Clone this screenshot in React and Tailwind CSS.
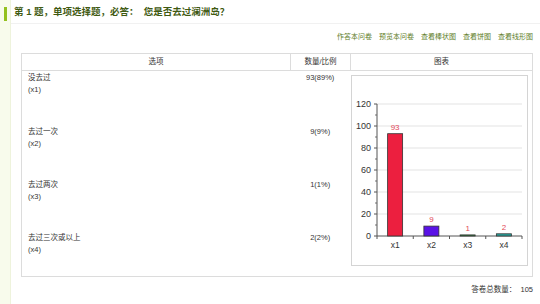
import React from 'react';

const font = { fontFamily: '"Liberation Sans", "Noto Sans CJK SC", sans-serif' };

const rows = [
    { label: '没去过', code: '(x1)', count: '93(89%)', h: 'h-[54px]' },
    { label: '去过一次', code: '(x2)', count: '9(9%)', h: 'h-[53px]' },
    { label: '去过两次', code: '(x3)', count: '1(1%)', h: 'h-[53px]' },
    { label: '去过三次或以上', code: '(x4)', count: '2(2%)', h: 'h-[45px]' },
];

const bars = [
    { name: 'x1', value: 93, fill: '#ec1f3f' },
    { name: 'x2', value: 9, fill: '#5a12e6' },
    { name: 'x3', value: 1, fill: '#2f9a3c' },
    { name: 'x4', value: 2, fill: '#26a69e' },
];

const links = ['作答本问卷', '预览本问卷', '查看棒状图', '查看饼图', '查看线形图'];

// bar chart drawn in the chart box coordinate space
const BarChart = () => {
    const x0 = 25;
    const x1 = 170;
    const y0 = 160;
    const k = 1.1;
    const cw = (x1 - x0) / 4;
    const grid = [20, 40, 60, 80, 100, 120];
    const minor = [10, 30, 50, 70, 90, 110];
    return (
        <svg width="176" height="190" viewBox="0 0 176 190" className="block">
            {grid.map((v) => (
                <line key={v} x1={x0} x2={x1} y1={y0 - v * k} y2={y0 - v * k} stroke="#e3e3e3" strokeWidth="1" />
            ))}
            {[0, ...grid].map((v) => (
                <g key={'l' + v}>
                    <line x1={x0 - 3} x2={x0} y1={y0 - v * k} y2={y0 - v * k} stroke="#555" strokeWidth="1" />
                    <text x={x0 - 6} y={y0 - v * k + 3} fontSize="9" textAnchor="end" fill="#333" style={font}>
                        {v}
                    </text>
                </g>
            ))}
            {minor.map((v) => (
                <line key={'m' + v} x1={x0 - 2} x2={x0} y1={y0 - v * k} y2={y0 - v * k} stroke="#777" strokeWidth="1" />
            ))}
            <line x1={x0} x2={x0} y1={y0 - 120 * k} y2={y0} stroke="#555" strokeWidth="1" />
            <line x1={x0} x2={x1} y1={y0} y2={y0} stroke="#555" strokeWidth="1" />
            {[0, 1, 2, 3, 4].map((i) => (
                <line key={'t' + i} x1={x0 + i * cw} x2={x0 + i * cw} y1={y0} y2={y0 + 3} stroke="#555" strokeWidth="1" />
            ))}
            {bars.map((b, i) => {
                const cx = x0 + cw * i + cw / 2;
                const h = Math.max(b.value * k, 1);
                return (
                    <g key={b.name}>
                        <rect x={cx - 7.5} y={y0 - h} width="15" height={h} fill={b.fill} stroke="#333" strokeWidth="0.8" />
                        <text x={cx} y={y0 - h - 4} fontSize="8" textAnchor="middle" fill="#e24a58" style={font}>
                            {b.value}
                        </text>
                        <text x={cx} y={y0 + 12} fontSize="8.5" textAnchor="middle" fill="#333" style={font}>
                            {b.name}
                        </text>
                    </g>
                );
            })}
        </svg>
    );
};

export default function App() {
    return (
        <div className="w-[540px] h-[304px] flex bg-white overflow-hidden" style={font}>
            {/* left stripe */}
            <div className="w-[11px] h-full bg-[#f8fbec] border-r border-[#eef3dc] shrink-0">
                <div className="w-[3px] h-[14px] ml-[4px] mt-[7px] bg-[#94c11f]" />
            </div>

            <div className="flex-1 flex flex-col">
                {/* title */}
                <div className="h-[24px] flex items-center pl-[3px] border-b border-[#f1f1f1]">
                    <span className="text-[9.5px] font-bold text-[#3f5a12] whitespace-pre leading-none">
                        第 1 题，单项选择题，必答：  您是否去过澜洲岛？
                    </span>
                </div>

                {/* links */}
                <div className="h-[24px] flex items-center justify-end gap-[7px] pr-[7px]">
                    {links.map((l) => (
                        <span key={l} className="text-[7px] text-[#5e7d1f] leading-none">
                            {l}
                        </span>
                    ))}
                </div>

                {/* table */}
                <div className="ml-[10px] mt-[5px] w-[512px] border border-[#dcdcdc] text-[7.5px] text-[#333]">
                    <div className="flex h-[17px] border-b border-[#dcdcdc] items-stretch">
                        <div className="w-[269px] border-r border-[#dcdcdc] flex items-center justify-center">选项</div>
                        <div className="w-[60px] border-r border-[#dcdcdc] flex items-center justify-center">数量/比例</div>
                        <div className="flex-1 flex items-center justify-center">图表</div>
                    </div>
                    <div className="flex h-[205px]">
                        <div className="w-[270px] flex flex-col">
                            {rows.map((r) => (
                                <div key={r.code} className={`${r.h} pl-[6px] pt-[1px] leading-[12px]`}>
                                    <div>{r.label}</div>
                                    <div>{r.code}</div>
                                </div>
                            ))}
                        </div>
                        <div className="w-[60px] flex flex-col">
                            {rows.map((r) => (
                                <div key={r.code} className={`${r.h} pt-[1px] leading-[12px] text-center`}>
                                    {r.count}
                                </div>
                            ))}
                        </div>
                        <div className="flex-1 pl-[1px] pt-[4px] pr-[4px]">
                            <div className="w-[177px] h-[191px] border border-[#d4d4d4] bg-white">
                                <BarChart />
                            </div>
                        </div>
                    </div>
                </div>

                {/* footer */}
                <div className="h-[26px] flex items-center justify-end pr-[7px] text-[7.5px] text-[#333] whitespace-pre">
                    答卷总数量：  105
                </div>
            </div>
        </div>
    );
}
